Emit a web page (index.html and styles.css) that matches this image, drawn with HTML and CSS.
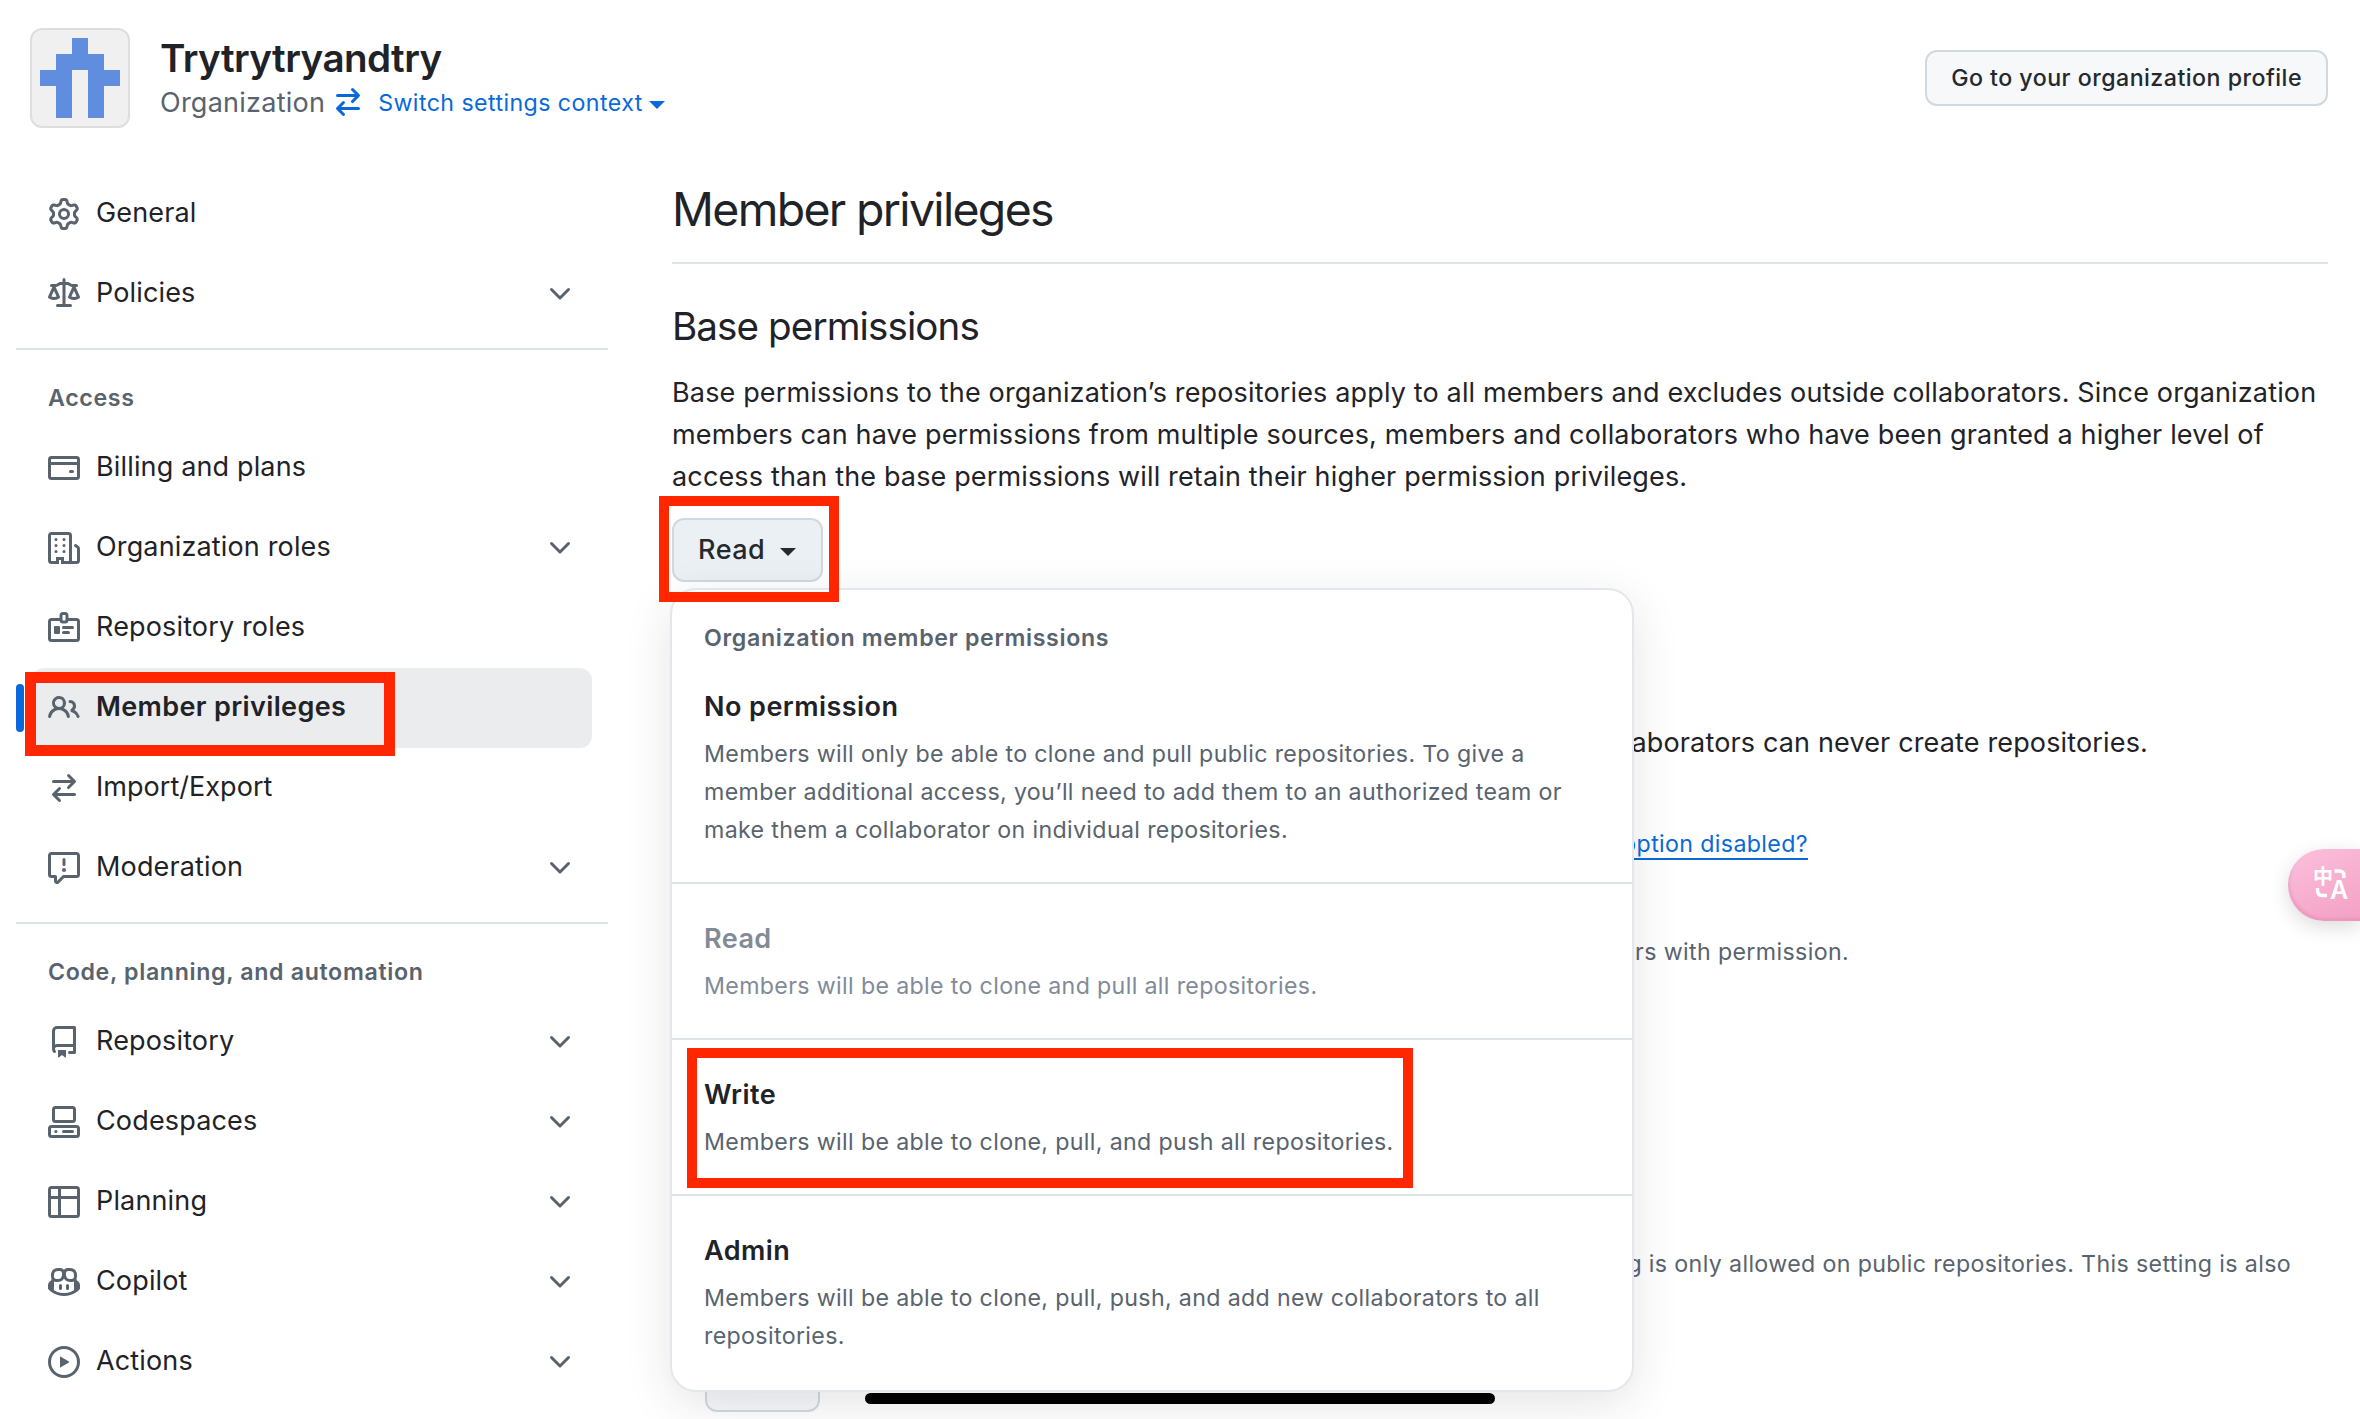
FILE: index.html
```
<!DOCTYPE html>
<html lang="en">
<head>
<meta charset="utf-8">
<title>Member privileges</title>
<link rel="stylesheet" href="styles.css">
</head>
<body>
<svg class="sprite" aria-hidden="true">
  <symbol id="chevron" viewBox="0 0 16 16"><path d="M12.78 5.22a.749.749 0 0 1 0 1.06l-4.25 4.25a.749.749 0 0 1-1.06 0L3.22 6.28a.749.749 0 1 1 1.06-1.06L8 8.939l3.72-3.719a.749.749 0 0 1 1.06 0Z"/></symbol>
  <symbol id="switch" viewBox="0 0 16 16"><path d="M5.22 14.78a.75.75 0 0 0 1.06-1.06L4.56 12h8.69a.75.75 0 0 0 0-1.5H4.56l1.72-1.72a.75.75 0 0 0-1.06-1.06l-3 3a.75.75 0 0 0 0 1.06l3 3Zm5.56-6.5a.75.75 0 1 1-1.06-1.06l1.72-1.72H2.75a.75.75 0 0 1 0-1.5h8.69L9.72 2.28a.75.75 0 0 1 1.06-1.06l3 3a.75.75 0 0 1 0 1.06l-3 3Z"/></symbol>
</svg>

<header class="header">
  <svg class="avatar" viewBox="0 0 100 100"><rect class="avatar-bg" x="1" y="1" width="98" height="98" rx="11"/><path class="avatar-mark" d="M42 10h16v16h16v16h16v16H74v32H58V42H42v48H26V58H10V42h16V26h16z"/></svg>
  <div class="org">
    <h2 class="org-name">Trytrytryandtry</h2>
    <div class="org-line">
      <span class="org-kind">Organization</span>
      <a class="switcher"><svg class="icon"><use href="#switch"/></svg><span class="switcher-text">Switch settings context</span><i class="caret"></i></a>
    </div>
  </div>
  <a class="profile-btn">Go to your organization profile</a>
</header>

<div class="layout">
  <nav class="sidebar">
    <a class="item"><svg class="icon" viewBox="0 0 16 16"><path d="M8 0a8.2 8.2 0 0 1 .701.031C9.444.095 9.99.645 10.16 1.29l.288 1.107c.018.066.079.158.212.224.231.114.454.243.668.386.123.082.233.09.299.071l1.103-.303c.644-.176 1.392.021 1.82.63.27.385.506.792.704 1.218.315.675.111 1.422-.364 1.891l-.814.806c-.049.048-.098.147-.088.294.016.257.016.515 0 .772-.01.147.038.246.088.294l.814.806c.475.469.679 1.216.364 1.891a7.977 7.977 0 0 1-.704 1.217c-.428.61-1.176.807-1.82.63l-1.102-.302c-.067-.019-.177-.011-.3.071a5.909 5.909 0 0 1-.668.386c-.133.066-.194.158-.211.224l-.29 1.106c-.168.646-.715 1.196-1.458 1.26a8.006 8.006 0 0 1-1.402 0c-.743-.064-1.289-.614-1.458-1.26l-.289-1.106c-.018-.066-.079-.158-.212-.224a5.738 5.738 0 0 1-.668-.386c-.123-.082-.233-.09-.299-.071l-1.103.303c-.644.176-1.392-.021-1.82-.63a8.12 8.12 0 0 1-.704-1.218c-.315-.675-.111-1.422.363-1.891l.815-.806c.05-.048.098-.147.088-.294a6.214 6.214 0 0 1 0-.772c.01-.147-.038-.246-.088-.294l-.815-.806C.635 6.045.431 5.298.746 4.623a7.92 7.92 0 0 1 .704-1.217c.428-.61 1.176-.807 1.82-.63l1.102.302c.067.019.177.011.3-.071.214-.143.437-.272.668-.386.133-.066.194-.158.211-.224l.29-1.106C6.009.645 6.556.095 7.299.03 7.53.01 7.764 0 8 0Zm-.571 1.525c-.036.003-.108.036-.137.146l-.289 1.105c-.147.561-.549.967-.998 1.189-.173.086-.34.183-.5.29-.417.278-.97.423-1.529.27l-1.103-.303c-.109-.03-.175.016-.195.045-.22.312-.412.644-.573.99-.014.031-.021.11.059.19l.815.806c.411.406.562.957.53 1.456a4.709 4.709 0 0 0 0 .582c.032.499-.119 1.05-.53 1.456l-.815.806c-.081.08-.073.159-.059.19.162.346.353.677.573.989.02.03.085.076.195.046l1.102-.303c.56-.153 1.113-.008 1.53.27.161.107.328.204.501.29.447.222.85.629.997 1.189l.289 1.105c.029.109.101.143.137.146a6.6 6.6 0 0 0 1.142 0c.036-.003.108-.036.137-.146l.289-1.105c.147-.561.549-.967.998-1.189.173-.086.34-.183.5-.29.417-.278.97-.423 1.529-.27l1.103.303c.109.029.175-.016.195-.045.22-.313.411-.644.573-.99.014-.031.021-.11-.059-.19l-.815-.806c-.411-.406-.562-.957-.53-1.456a4.709 4.709 0 0 0 0-.582c-.032-.499.119-1.05.53-1.456l.815-.806c.081-.08.073-.159.059-.19a6.464 6.464 0 0 0-.573-.989c-.02-.03-.085-.076-.195-.046l-1.102.303c-.56.153-1.113.008-1.53-.27a4.44 4.44 0 0 0-.501-.29c-.447-.222-.85-.629-.997-1.189l-.289-1.105c-.029-.11-.101-.143-.137-.146a6.6 6.6 0 0 0-1.142 0ZM11 8a3 3 0 1 1-6 0 3 3 0 0 1 6 0ZM9.5 8a1.5 1.5 0 1 0-3.001.001A1.5 1.5 0 0 0 9.5 8Z"/></svg><span class="label">General</span></a>
    <a class="item"><svg class="icon" viewBox="0 0 16 16"><path d="M8.75.75V2h.985c.304 0 .603.08.867.231l1.29.736c.038.022.08.033.124.033h2.234a.75.75 0 0 1 0 1.5h-.427l2.111 4.692a.75.75 0 0 1-.154.838l-.53-.53.529.531-.001.002-.002.002-.006.006-.006.005-.01.01-.045.04c-.21.176-.441.327-.686.45C14.556 10.78 13.88 11 13 11a4.498 4.498 0 0 1-2.023-.454 3.544 3.544 0 0 1-.686-.45l-.045-.04-.016-.015-.006-.006-.004-.004v-.001a.75.75 0 0 1-.154-.838L12.178 4.5h-.162c-.305 0-.604-.079-.868-.231l-1.29-.736a.245.245 0 0 0-.124-.033H8.75V13h2.5a.75.75 0 0 1 0 1.5h-6.5a.75.75 0 0 1 0-1.5h2.5V3.5h-.984a.245.245 0 0 0-.124.033l-1.289.737c-.265.15-.564.23-.869.23h-.162l2.112 4.692a.75.75 0 0 1-.154.838l-.53-.53.529.531-.001.002-.002.002-.006.006-.016.015-.045.04c-.21.176-.441.327-.686.45C4.556 10.78 3.88 11 3 11a4.498 4.498 0 0 1-2.023-.454 3.544 3.544 0 0 1-.686-.45l-.045-.04-.016-.015-.006-.006-.004-.004v-.001a.75.75 0 0 1-.154-.838L2.178 4.5H1.75a.75.75 0 0 1 0-1.5h2.234a.249.249 0 0 0 .125-.033l1.288-.737c.265-.15.564-.23.869-.23h.984V.75a.75.75 0 0 1 1.5 0Zm2.945 8.477c.285.135.718.273 1.305.273s1.02-.138 1.305-.273L13 6.327Zm-10 0c.285.135.718.273 1.305.273s1.02-.138 1.305-.273L3 6.327Z"/></svg><span class="label">Policies</span><svg class="icon"><use href="#chevron"/></svg></a>

    <h3 class="group">Access</h3>
    <a class="item"><svg class="icon line" viewBox="0 0 16 16"><rect x=".75" y="2.75" width="14.5" height="10.5" rx="1"/><path d="M.75 5.75h14.5M11.25 9.75h1"/></svg><span class="label">Billing and plans</span></a>
    <a class="item"><svg class="icon line" viewBox="0 0 16 16"><path d="M4.75 15.25h-3a1 1 0 0 1-1-1V1.75a1 1 0 0 1 1-1h8.5a1 1 0 0 1 1 1v12.5a1 1 0 0 1-1 1h-3v-2h-2.500zM11 15.250h3.250a1 1 0 0 0 1-1V8.285a1 1 0 0 0-.445-.83L13.750 6.750"/><path d="M4 3.750h.01M8 3.750h.01M4 6.750h.01M8 6.750h.01M4 9.750h.01M8 9.750h.01"/></svg><span class="label">Organization roles</span><svg class="icon"><use href="#chevron"/></svg></a>
    <a class="item"><svg class="icon line" viewBox="0 0 16 16"><path d="M6 3.750H1.750a1 1 0 0 0-1 1v8.500a1 1 0 0 0 1 1h12.500a1 1 0 0 0 1-1v-8.500a1 1 0 0 0-1-1H10"/><rect x="6.500" y=".75" width="3" height="4.250" rx="1"/><path d="M7.750 7.750h4.500M7.750 10.250h2.500"/><rect class="solid" x="3" y="7" width="3" height="4" rx=".5"/></svg><span class="label">Repository roles</span></a>
    <a class="item current"><svg class="icon" viewBox="0 0 16 16"><path d="M2 5.500a3.500 3.500 0 1 1 5.898 2.549 5.508 5.508 0 0 1 3.034 4.084.75.75 0 1 1-1.482.235 4 4 0 0 0-7.900 0 .75.75 0 0 1-1.482-.236A5.507 5.507 0 0 1 3.102 8.050 3.493 3.493 0 0 1 2 5.500ZM11 4a3.001 3.001 0 0 1 2.220 5.018 5.010 5.010 0 0 1 2.560 3.012.749.749 0 0 1-.885.954.752.752 0 0 1-.549-.514 3.507 3.507 0 0 0-2.522-2.372.75.75 0 0 1-.574-.73v-.352a.75.75 0 0 1 .416-.672A1.500 1.500 0 0 0 11 5.500.75.75 0 0 1 11 4Zm-5.500-.5a2 2 0 1 0-.001 3.999A2 2 0 0 0 5.500 3.500Z"/></svg><span class="label">Member privileges</span><span class="mark mark-nav"></span></a>
    <a class="item"><svg class="icon"><use href="#switch"/></svg><span class="label import">Import/Export</span></a>
    <a class="item"><svg class="icon" viewBox="0 0 16 16"><path d="M0 1.75C0 .784.784 0 1.75 0h12.5C15.216 0 16 .784 16 1.75v9.5A1.75 1.75 0 0 1 14.25 13H8.06l-2.573 2.573A1.458 1.458 0 0 1 3 14.543V13H1.75A1.75 1.75 0 0 1 0 11.25Zm1.75-.25a.25.25 0 0 0-.25.25v9.5c0 .138.112.25.25.25h2a.75.75 0 0 1 .75.75v2.19l2.72-2.72a.749.749 0 0 1 .53-.22h6.5a.25.25 0 0 0 .25-.25v-9.5a.25.25 0 0 0-.25-.25Zm7 2.25v2.5a.75.75 0 0 1-1.5 0v-2.5a.75.75 0 0 1 1.5 0ZM9 9a1 1 0 1 1-2 0 1 1 0 0 1 2 0Z"/></svg><span class="label">Moderation</span><svg class="icon"><use href="#chevron"/></svg></a>

    <h3 class="group">Code, planning, and automation</h3>
    <a class="item"><svg class="icon" viewBox="0 0 16 16"><path d="M2 2.5A2.5 2.5 0 0 1 4.5 0h8.75a.75.75 0 0 1 .75.75v12.5a.75.75 0 0 1-.75.75h-2.5a.75.75 0 0 1 0-1.5h1.75v-2h-8a1 1 0 0 0-.714 1.7.75.75 0 1 1-1.072 1.05A2.495 2.495 0 0 1 2 11.5Zm10.5-1h-8a1 1 0 0 0-1 1v6.708A2.486 2.486 0 0 1 4.5 9h8ZM5 12.25a.25.25 0 0 1 .25-.25h3.5a.25.25 0 0 1 .25.25v3.25a.25.25 0 0 1-.4.2l-1.45-1.087a.249.249 0 0 0-.3 0L5.400 15.700a.25.25 0 0 1-.4-.2Z"/></svg><span class="label">Repository</span><svg class="icon"><use href="#chevron"/></svg></a>
    <a class="item"><svg class="icon line" viewBox="0 0 16 16"><rect x="2.750" y=".75" width="10.500" height="7" rx="1"/><rect x=".75" y="10.250" width="14.500" height="5" rx="1"/><path d="M3.900 12.750h.1M7.750 12.750h4.500"/></svg><span class="label">Codespaces</span><svg class="icon"><use href="#chevron"/></svg></a>
    <a class="item"><svg class="icon line" viewBox="0 0 16 16"><rect x=".75" y=".75" width="14.500" height="14.500" rx="1"/><path d="M5.750.75v14.500M.75 5.750h14.500"/></svg><span class="label">Planning</span><svg class="icon"><use href="#chevron"/></svg></a>
    <a class="item"><svg class="icon" viewBox="0 0 16 16"><path d="M7.998 15.035c-4.562 0-7.873-2.914-7.998-3.749V9.338c.085-.628.677-1.686 1.588-2.065.013-.07.024-.143.036-.218.029-.183.06-.384.126-.612-.201-.508-.254-1.084-.254-1.656 0-.87.128-1.769.693-2.484.579-.733 1.494-1.124 2.724-1.261 1.206-.134 2.262.034 2.944.765.05.053.096.108.139.165.044-.057.094-.112.143-.165.682-.731 1.738-.899 2.944-.765 1.23.137 2.145.528 2.724 1.261.566.715.693 1.614.693 2.484 0 .572-.053 1.148-.254 1.656.066.228.098.429.126.612.012.076.024.148.037.218.924.385 1.522 1.471 1.591 2.095v1.872c0 .766-3.351 3.795-8.002 3.795Zm0-1.485c2.28 0 4.584-1.11 5.002-1.433V7.862l-.023-.116c-.49.21-1.075.291-1.727.291-1.146 0-2.059-.327-2.71-.991A3.222 3.222 0 0 1 8 6.303a3.24 3.24 0 0 1-.544.743c-.65.664-1.563.991-2.71.991-.652 0-1.236-.081-1.727-.291l-.023.116v4.255c.419.323 2.722 1.433 5.002 1.433ZM6.762 2.83c-.193-.206-.637-.413-1.682-.297-1.019.113-1.479.404-1.713.7-.247.312-.369.789-.369 1.554 0 .793.129 1.171.308 1.371.162.181.519.379 1.442.379.853 0 1.339-.235 1.638-.54.315-.322.527-.827.617-1.553.117-.935-.037-1.395-.241-1.614Zm4.155-.297c-1.044-.116-1.488.091-1.681.297-.204.219-.359.679-.242 1.614.091.726.303 1.231.618 1.553.299.305.784.54 1.638.54.922 0 1.28-.198 1.442-.379.179-.2.308-.578.308-1.371 0-.765-.123-1.242-.37-1.554-.233-.296-.693-.587-1.713-.7ZM6.25 9.037a.75.75 0 0 1 .75.75v1.501a.75.75 0 0 1-1.5 0V9.787a.75.75 0 0 1 .75-.75Zm4.250.75v1.501a.75.75 0 0 1-1.500 0V9.787a.75.75 0 0 1 1.500 0Z"/></svg><span class="label">Copilot</span><svg class="icon"><use href="#chevron"/></svg></a>
    <a class="item"><svg class="icon line" viewBox="0 0 16 16"><circle cx="8" cy="8" r="7.250"/><path class="solid" d="M6 5.560a.25.25 0 0 1 .38-.21l4.100 2.440a.25.25 0 0 1 0 .42l-4.100 2.440a.25.25 0 0 1-.38-.21z"/></svg><span class="label">Actions</span><svg class="icon"><use href="#chevron"/></svg></a>
  </nav>

  <main class="main">
    <h1 class="title">Member privileges</h1>
    <h2 class="subtitle">Base permissions</h2>
    <p class="intro">Base permissions to the organization’s repositories apply to all members and excludes outside collaborators. Since organization members can have permissions from multiple sources, members and collaborators who have been granted a higher level of access than the base permissions will retain their higher permission privileges.</p>

    <div class="picker">
      <button class="picker-btn">Read<i class="caret"></i></button>
      <div class="menu">
        <div class="menu-head">Organization member permissions</div>
        <div class="option"><div class="option-name">No permission</div><p class="option-text">Members will only be able to clone and pull public repositories. To give a member additional access, you’ll need to add them to an authorized team or make them a collaborator on individual repositories.</p></div>
        <div class="option disabled"><div class="option-name">Read</div><p class="option-text">Members will be able to clone and pull all repositories.</p></div>
        <div class="option"><div class="option-name">Write</div><p class="option-text">Members will be able to clone, pull, and push all repositories.</p><span class="mark mark-write"></span></div>
        <div class="option"><div class="option-name">Admin</div><p class="option-text">Members will be able to clone, pull, push, and add new collaborators to all repositories.</p></div>
      </div>
      <span class="mark mark-read"></span>
    </div>

    <div class="behind">
      <p class="creation">collaborators can never create repositories.</p>
      <p class="note why"><a class="link">option disabled?</a></p>
      <p class="note members">members with permission.</p>
      <p class="note forking">forking is only allowed on public repositories. This setting is also</p>
      <button class="save"></button>
    </div>
  </main>
</div>

<div class="home-bar"></div>
<div class="translate"><svg class="translate-icon" viewBox="0 0 36 36"><text class="glyph-zh" x="0" y="19">中</text><text class="glyph-a" x="17" y="33.500">A</text><path d="M21.500 6h4.500q5 0 5 5v2M4.500 23v2.500q0 5 5 5h4.500"/></svg></div>
</body>
</html>
```
FILE: styles.css
```
* { box-sizing: border-box; margin: 0; padding: 0; }
html, body { height: 1419px; overflow: hidden; }
body {
  position: relative;
  background: #fff;
  color: #1f2328;
  font: 400 27px/42px "Inter", "Noto Sans CJK SC", sans-serif;
  letter-spacing: .15px;
}
.sprite { position: absolute; width: 0; height: 0; }
.icon { width: 32px; height: 32px; flex: none; fill: #59636e; overflow: visible; }
.line { fill: none; stroke: #59636e; stroke-width: 1.5; stroke-linecap: round; }
.solid { fill: #59636e; stroke: none; }
.caret { width: 0; height: 0; border: 8px solid transparent; border-top-color: currentColor; border-bottom: 0; }

.header { display: flex; height: 174px; padding: 28px 32px 0 30px; }
.avatar { width: 100px; height: 100px; flex: none; }
.avatar-bg { fill: #f0f0f0; stroke: #dedede; stroke-width: 2; }
.avatar-mark { fill: #608ede; }
.org { flex: 1; padding: 5px 0 0 30px; }
.org-name { font-size: 38.6px; font-weight: 600; line-height: 50px; letter-spacing: -.55px; }
.org-line { display: flex; align-items: center; height: 40px; gap: 7px; color: #59636e; letter-spacing: .25px; }
.switcher { display: flex; align-items: center; color: #0969da; font-size: 23.2px; letter-spacing: .42px; }
.switcher .icon { fill: #0969da; margin-top: -2px; }
.switcher-text { margin: 0 6px 0 14px; }
.switcher .caret { margin-top: 3px; }
.profile-btn {
  height: 56px; margin-top: 22px; padding: 0 24px;
  border: 2px solid #d1d9e0; border-radius: 12px; background: #f6f8fa;
  color: #25292e; font-size: 23.2px; font-weight: 500; line-height: 53px; letter-spacing: .47px;
}

.layout { display: grid; grid-template-columns: 592px 1656px; column-gap: 64px; padding-left: 16px; }
.sidebar { display: flex; flex-direction: column; }
.item { position: relative; display: flex; align-items: center; gap: 16px; height: 80px; margin: 0 16px; padding: 0 16px; border-radius: 12px; }
.label { flex: 1; padding-bottom: 2px; }
.import { letter-spacing: .04px; }
.current { background: #ebecee; font-weight: 600; letter-spacing: .36px; }
.current::before { content: ""; position: absolute; left: -16px; top: 16px; width: 8px; height: 48px; border-radius: 4px; background: #0969da; }
.group {
  height: 80px; margin-top: 14px; padding: 29px 33px 0 32px; border-top: 2px solid #dfe4e9;
  color: #59636e; font-size: 23.2px; font-weight: 600; line-height: 38px; letter-spacing: .65px;
}

.main { display: flex; flex-direction: column; }
.title { height: 90px; margin-bottom: 37px; padding-top: 5px; border-bottom: 2px solid #dfe4e9; font-size: 46.4px; font-weight: 400; line-height: 60px; letter-spacing: -1.65px; }
.subtitle { margin-bottom: 21px; font-size: 38.6px; font-weight: 400; line-height: 50px; letter-spacing: -.9px; }
.picker { position: relative; align-self: flex-start; margin-top: 20px; }
.picker-btn {
  display: flex; align-items: center; gap: 15px; width: 151px; height: 64px; padding: 0 0 0 24px;
  border: 2px solid #d1d9e0; border-radius: 12px; background: #ebf0f4;
  color: #25292e; font: inherit; font-weight: 500; letter-spacing: .5px;
}
.picker-btn .caret { margin-top: 4px; }
.menu {
  position: absolute; z-index: 2; left: 0; top: 72px; width: 960px; height: 800px;
  border-radius: 24px; background: #fff;
  box-shadow: 0 0 0 2px #e3e7ec, 0 12px 48px rgba(37, 41, 46, .13);
}
.menu-head { height: 63px; padding: 30px 32px 0; color: #59636e; font-size: 23.2px; font-weight: 600; line-height: 37px; letter-spacing: .64px; }
.option { position: relative; padding: 33px 32px 33.6px; border-bottom: 2px solid #dfe4e9; }
.menu-head + .option { padding-bottom: 32.6px; }
.disabled, .disabled ~ .option { padding-top: 34px; padding-bottom: 32.6px; }
.option:last-child { border-bottom: 0; }
.option-name { margin-bottom: 7.4px; font-weight: 600; letter-spacing: .45px; }
.option-text { color: #59636e; font-size: 23.2px; line-height: 38px; letter-spacing: .35px; }
.disabled .option-name, .disabled .option-text { color: #818b98; }

.behind { display: flex; flex-direction: column; text-align: right; }
.creation { width: 1476px; margin-top: 140px; }
.note { color: #59636e; font-size: 23.2px; line-height: 38px; letter-spacing: .362px; }
.why { width: 1136px; margin-top: 61px; }
.members { width: 1177px; margin-top: 70px; }
.forking { width: 1619px; margin-top: 274px; }
.link { color: #0969da; text-decoration: underline; text-decoration-thickness: 2px; text-underline-offset: 6px; }
.save { width: 115px; height: 64px; margin: 65px 0 0 33px; border: 2px solid #d1d9e0; border-radius: 12px; background: #f6f8fa; }

.mark { position: absolute; z-index: 3; border: 11px solid #ff2600; }
.mark-nav { left: -7px; top: 4px; width: 370px; height: 84px; }
.mark-read { left: -13px; top: -22px; width: 180px; height: 106px; border-width: 10px; }
.mark-write { left: 15px; top: 8px; width: 726px; height: 140px; border-width: 10px; }

.home-bar { position: absolute; z-index: 4; left: 865px; top: 1393px; width: 630px; height: 11px; border-radius: 6px; background: #000; }
.translate {
  position: absolute; z-index: 4; right: 0; top: 849px; width: 72px; height: 72px; padding: 16px 0 0 25px;
  border-radius: 36px 0 0 36px; background: linear-gradient(155deg, #fcc0dc, #f3a0c4);
  box-shadow: inset 2px -3px 2px rgba(214, 130, 170, .3), 0 6px 20px rgba(0, 0, 0, .14);
}
.translate-icon { display: block; width: 36px; height: 36px; overflow: visible; fill: none; stroke: #fff; stroke-width: 3.500; }
.glyph-zh { fill: #fff; stroke: none; font: 700 20px "Noto Sans CJK SC", sans-serif; letter-spacing: 0; }
.glyph-a { fill: #fff; stroke: none; font: 600 25px "Inter", sans-serif; letter-spacing: 0; }
```
